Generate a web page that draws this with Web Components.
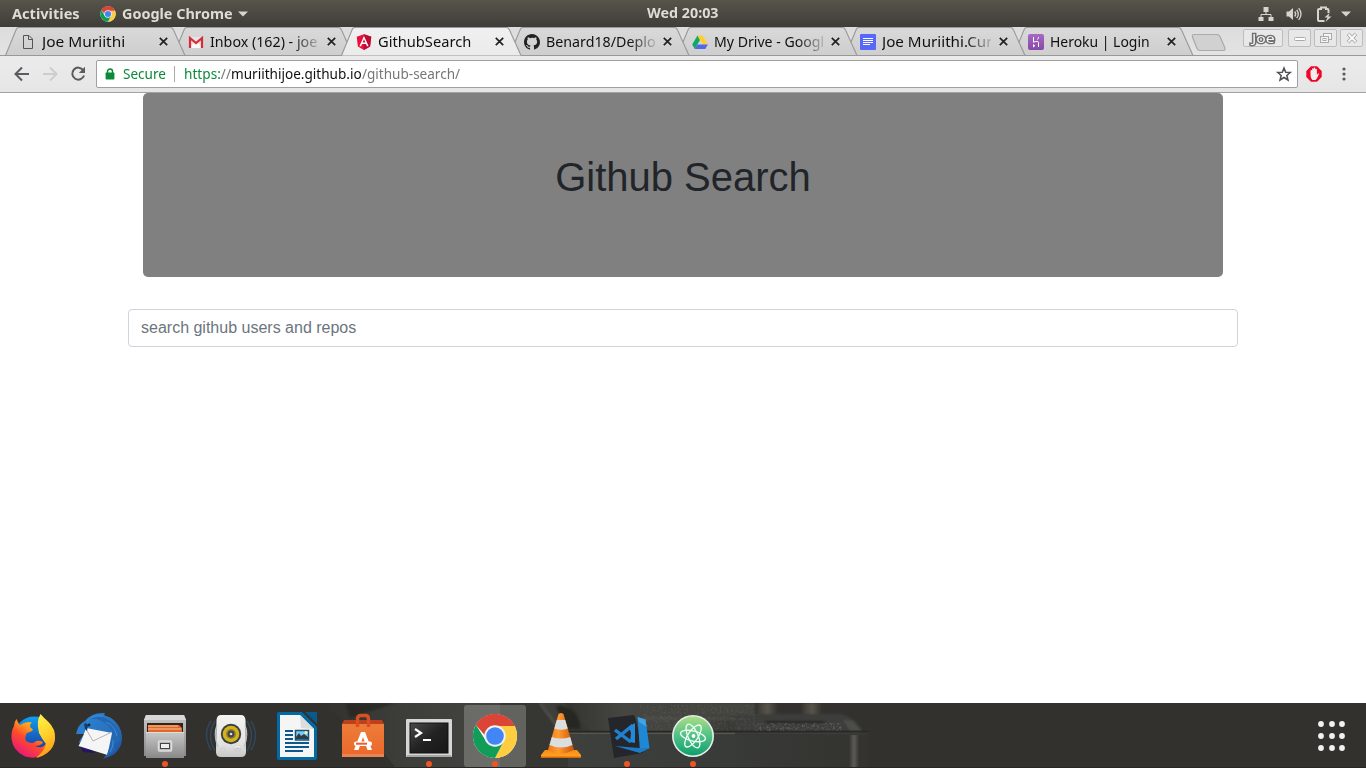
<!DOCTYPE html>
<html lang="en">
<head>
<meta charset="utf-8">
<title>GithubSearch</title>
<style>
html,body{margin:0;height:100%;overflow:hidden;background:#fff}
body{font-family:"Noto Sans","Open Sans",sans-serif}
</style>
</head>
<body>
<desktop-screen></desktop-screen>
<script>
const ICONS = {
chrome: ['0 0 48 48', `<circle cx="24" cy="24" r="23" fill="#fff"/><path d="M24 24L4.1 12.5A23 23 0 0 1 43.9 12.5Z" fill="#db4437"/><path d="M24 13.5H44.5A23 23 0 0 1 24 47L33.1 29.2Z" fill="#ffcd40"/><path d="M4.1 12.5A23 23 0 0 0 24 47L33.4 29L14.6 29.2Z" fill="#0f9d58"/><path d="M4.1 12.5A23 23 0 0 1 44.5 13.5H24L14 24Z" fill="#db4437"/><circle cx="24" cy="24" r="11.2" fill="#f1f1f1"/><circle cx="24" cy="24" r="9.2" fill="#4285f4"/>`],
caret: ['0 0 10 6', `<path d="M0 .5H10L5 5.5Z" fill="#d6d4cf"/>`],
net: ['0 0 16 16', `<path d="M5.5 1h5v5h-5zM.5 11h5v4h-5zM10.500 11h5v4h-5z" fill="#d6d4cf"/><path d="M8 6v2.500M3 11V8.500h10V11" fill="none" stroke="#d6d4cf"/>`],
sound: ['0 0 16 16', `<path d="M.5 5.500H3L7 2v12L3 10.500H.5Z" fill="#d6d4cf"/><path d="M8.700 5.500q2 2.500 0 5M10.700 3.800q3.200 4.200 0 8.400M12.700 2.200q4.600 5.800 0 11.600" fill="none" stroke="#d6d4cf" stroke-width="1.300"/>`],
battery: ['0 0 16 16', `<path d="M8.500 15H3q-1 0-1-1V4q0-1 1-1h2V1.500h5V3h1.500q1 0 1 1v3" fill="none" stroke="#d6d4cf" stroke-width="2"/><path d="M13.500 7L8.500 11.500h3L9.500 16l6-5.500h-3Z" fill="#d6d4cf"/>`],
file: ['0 0 16 16', `<path d="M3.500 1.500h5.500l3.500 3.500v9.500h-9zM8.500 1.500v4h4" fill="none" stroke="#555"/>`],
gmail: ['0 0 16 16', `<path d="M1 3h14v11H1z" fill="#e5e5e5"/><path d="M1 14L7 8l2 0 6 6Z" fill="#f7f7f7"/><path d="M2 14V4L8 9l6-5V14" fill="none" stroke="#d72b35" stroke-width="2.200"/>`],
angular: ['0 0 16 16', `<path d="M8 .2L15.300 2.800 14.100 12.500 8 16 1.900 12.500.7 2.800Z" fill="#e90f3b"/><path d="M8 .2L15.300 2.800 14.100 12.500 8 16Z" fill="#bd0a32"/><path fill-rule="evenodd" d="M8 2L12.600 12.200H10.900L10 9.900H6L5.100 12.200H3.400ZM8 5.200L6.600 8.400H9.400Z" fill="#fff"/>`],
github: ['0 0 16 16', `<path fill="#222" d="M8 0C3.580 0 0 3.580 0 8c0 3.540 2.290 6.530 5.470 7.590.4.070.55-.17.55-.38v-1.490c-2.010.37-2.530-.49-2.690-.94-.09-.23-.48-.94-.82-1.130-.28-.15-.68-.52-.01-.53.63-.01 1.080.58 1.230.82.72 1.210 1.870.87 2.330.66.07-.52.28-.87.51-1.070-1.780-.2-3.640-.89-3.640-3.950 0-.87.31-1.590.82-2.150-.08-.2-.36-1.020.08-2.120 0 0 .67-.21 2.200.82A7.600 7.600 0 0 1 8 3.870c.68 0 1.360.09 2 .27 1.530-1.040 2.200-.82 2.200-.82.44 1.100.16 1.920.08 2.120.51.56.82 1.270.82 2.150 0 3.070-1.870 3.750-3.650 3.950.29.25.54.73.54 1.480v2.190c0 .21.15.46.55.38A8 8 0 0 0 8 0z"/>`],
drive: ['0 0 16 16', `<path d="M5.500 1.500L8 6 2.800 15 .2 10.500Z" fill="#11a861"/><path d="M5.500 1.500H10.600L15.900 10.500H10.700Z" fill="#ffcf2e"/><path d="M5.400 10.500H15.900L13.300 15H2.800Z" fill="#5169e8"/>`],
docs: ['0 0 16 16', `<rect width="16" height="16" rx="1" fill="#5767f7"/><path d="M3 4.500h10M3 6.500h10M3 8.500h10M3 10.500h7" stroke="#fff"/>`],
heroku: ['0 0 16 16', `<defs><linearGradient id="a" x2="0" y2="1"><stop stop-color="#a868c4"/><stop offset="1" stop-color="#8748a8"/></linearGradient></defs><rect width="16" height="16" rx="2" fill="url(#a)"/><path d="M5.500 3v5.200q5-1.800 5 .5V13M10.500 3q0 1.500-1 2.500M5.500 10.500V13l1.300-1.200Z" stroke="#fff" stroke-width="1" fill="none"/>`],
close: ['0 0 9 9', `<path d="M.8.8L8.200 8.200M8.200.8L.8 8.200" stroke="#222" stroke-width="1.700"/>`],
back: ['0 0 16 16', `<path d="M15 8H2M8 1.500L1.500 8 8 14.500" fill="none" stroke="#5a5a5f" stroke-width="2"/>`],
fwd: ['0 0 16 16', `<path d="M1 8H14M8 1.500L14.500 8 8 14.500" fill="none" stroke="#cdcdcd" stroke-width="2"/>`],
reload: ['0 0 16 16', `<path d="M13.300 4.300A6 6 0 1 0 14 9.500" fill="none" stroke="#5a5a5f" stroke-width="2"/><path d="M15 .8V7H8.800Z" fill="#5a5a5f"/>`],
lock: ['0 0 10 12', `<path d="M2.500 5V3.500a2.500 2.500 0 0 1 5 0V5" fill="none" stroke="#0b8a3a" stroke-width="1.500"/><rect x=".6" y="4.500" width="8.800" height="7" rx=".8" fill="#0b8a3a"/>`],
star: ['0 0 16 16', `<path d="M8 2L9.700 6.200 14.300 6.500 10.800 9.500 12 14 8 11.500 4 14 5.200 9.500 1.700 6.500 6.300 6.200Z" fill="none" stroke="#4f4f54" stroke-width="1.500"/>`],
adblock: ['0 0 16 16', `<path d="M5 .3H11L15.700 5V11L11 15.700H5L.3 11V5Z" fill="#f00624"/><path d="M4.500 8V5q0-1 .8-1t.8 1V3.200q0-.9.8-.9t.8.900V2.500q0-.9.8-.9t.8.900v1.200q0-.9.8-.9t.8.900V9l.8-1.300q.7-.8 1.400 0L10.900 12.500 9.500 14H6.500Q4.500 12.500 4.500 8Z" fill="#eee"/>`],
kebab: ['0 0 4 14', `<g fill="#5a5a5f"><circle cx="2" cy="2" r="1.600"/><circle cx="2" cy="7" r="1.600"/><circle cx="2" cy="12" r="1.600"/></g>`],
wmin: ['0 0 14 10', `<rect x="1.500" y="4.500" width="11" height="3" rx="1" fill="#fff" stroke="#aaa"/>`],
wmax: ['0 0 14 12', `<g fill="#f5f5f5" stroke="#aaa"><rect x="4.500" y="1.500" width="8" height="6"/><rect x="1.500" y="4.500" width="8" height="6"/><rect x="4" y="6.500" width="3" height="2"/></g>`],
wclose: ['0 0 14 12', `<path d="M3 2L11 10M11 2L3 10" stroke="#aaa" stroke-width="3.600"/><path d="M3.400 2.400L10.600 9.600M10.600 2.400L3.400 9.600" stroke="#fff" stroke-width="1.800"/>`],
firefox: ['0 0 48 48', `<defs><linearGradient id="a" x1=".85" y1=".1" x2=".2" y2=".95"><stop offset="0" stop-color="#ffd91f"/><stop offset=".35" stop-color="#ff9a1c"/><stop offset=".6" stop-color="#ff4a2c"/><stop offset="1" stop-color="#e8157d"/></linearGradient><linearGradient id="b" x1="0" y1="0" x2="0" y2="1"><stop offset="0" stop-color="#109ff0"/><stop offset="1" stop-color="#1c2a94"/></linearGradient><linearGradient id="c" x1=".3" y1="0" x2=".6" y2="1"><stop offset="0" stop-color="#fff044"/><stop offset=".5" stop-color="#ffd02a"/><stop offset="1" stop-color="#ff9416"/></linearGradient></defs><circle cx="25" cy="24" r="19.500" fill="url(#b)"/><path d="M7.500 7Q9 11 11 13Q17 9 23 10.500Q20 13 21.500 15.500L24 17.500Q23 19.500 18 21Q15 25 17 29Q24 33 27 29Q33 28 34 31Q31 34 26 34Q34 38 38 30L46 26Q45 36 38 41Q28 48 16 44.500Q4 39 2.500 27Q2 19 5 14Q5 10 7.500 7Z" fill="url(#a)"/><path d="M31.500 2Q35 6 39 9.500Q47 17 46 27Q45 36 38 41Q33 45 27 46Q36 38 37 32Q33 27 30 21Q27 9 31.500 2Z" fill="url(#c)"/>`],
thunderbird: ['0 0 48 48', `<defs><linearGradient id="a" x1="0" y1="0" x2="1" y2="1"><stop stop-color="#2b87d6"/><stop offset=".5" stop-color="#2a74c0"/><stop offset="1" stop-color="#1c4f9a"/></linearGradient></defs><path d="M4 31L8 40 20 41 12 33Z" fill="#241463"/><path d="M1 22Q3 12 10 9Q17 0 30 1L29 3Q42 7 46 19Q50 34 38 43L28 47L34 39 4 31Q5 26 10 22Z" fill="url(#a)"/><path d="M11 16L37 21 32.500 43 3.500 34Q7 28 11 16Z" fill="#f5f5f6"/><path d="M11 17L18 29 37 20" fill="none" stroke="#b4b4b8"/><path d="M10 10Q18 4 26 9Q36 13 38 22L35 34L31 45L40 38 39 32 45 28 43 22Q41 11 30 6Q19 1 10 10Z" fill="#2467b2"/><path d="M9 12Q11 10 13 13L12 19L10 17Z" fill="#173a66"/><path d="M12 9Q18 3 28 4M31 10Q40 14 42 24M38 28Q39 34 35 40" stroke="#3a8fdc" fill="none"/><circle cx="14" cy="13" r="1.400" fill="#15263e"/>`],
files: ['0 0 48 48', `<defs><linearGradient id="a" x2="0" y2="1"><stop stop-color="#c8c8c8"/><stop offset="1" stop-color="#898989"/></linearGradient></defs><path d="M5 3H43L45 8V44H3V8Z" fill="url(#a)"/><path d="M5 3H43L45 8H3Z" fill="#d8d8d8"/><path d="M6 11H42V21H6Z" fill="#302420"/><path d="M7 13H38L41 16V22H7Z" fill="#df682d"/><path d="M7 14H37M7 17H40" stroke="#ffc392" stroke-width="1.200"/><path d="M5 20H43V46H5Z" fill="url(#a)"/><path d="M5 20.500H43" stroke="#ddd"/><rect x="17.500" y="29" width="13" height="10" rx="1" fill="#bbb" stroke="#ddd" stroke-width="1.500"/><rect x="19.500" y="31.500" width="9" height="5" fill="#eee" stroke="#444"/>`],
speaker: ['0 0 48 48', `<defs><linearGradient id="a" x2="0" y2="1"><stop stop-color="#f4f4f3"/><stop offset=".7" stop-color="#e2e2e0"/><stop offset="1" stop-color="#c8c8c6"/></linearGradient></defs><path d="M8 9Q-1 23 8 39M4 9Q-5 23 4 38M40 9Q49 23 40 39M44 9Q53 23 44 38" fill="none" stroke="#33465a" stroke-width="1.500"/><path d="M14 3H34Q38 3 38.500 8L39 40Q39 45 34 45H14Q9 45 9 40L9.500 8Q10 3 14 3Z" fill="url(#a)"/><path d="M10 13Q6 23 11 35M38 13Q42 23 37 35" fill="none" stroke="#b5c3cf" stroke-width="1.200"/><circle cx="24" cy="22" r="10.200" fill="#3f3f3f"/><circle cx="24" cy="22" r="8.300" fill="#d2b51c"/><circle cx="24" cy="22" r="5" fill="#93832f"/><circle cx="24" cy="22" r="3.400" fill="#454545"/><circle cx="24" cy="22" r="1.300" fill="#ddd"/><circle cx="30.500" cy="37" r="4" fill="#d0d0cf"/><path d="M27.500 35.500q3-3 6 0" stroke="#fff" fill="none"/><path d="M14 36h4v4h-4z" fill="none" stroke="#cfcfcf"/>`],
writer: ['0 0 48 48', `<path d="M6 0H29L44 15V46Q44 48 42 48H6Q4 48 4 46V2Q4 0 6 0Z" fill="#0369a3"/><path d="M32 0H44V12Z" fill="#075b8c"/><path d="M7 3H27L41 17V45H7Z" fill="#f5f5f5"/><path d="M27 3L28 16 41 17Z" fill="#ddd"/><path d="M12 19H20M12 23H20M12 27H20M12 31H36M12 35H36M12 39H30" stroke="#0c578e" stroke-width="1.800"/><path d="M22.500 18.500H35.500V28H22.500Z" fill="#7ec9f4" stroke="#155375" stroke-width="1.500"/><path d="M23 27V25L26 21 28 24 31 22 35 25V27Z" fill="#2b3c45"/><circle cx="33" cy="20.500" r="1.500" fill="#fff19d"/>`],
software: ['0 0 48 48', `<defs><linearGradient id="a" x2="0" y2="1"><stop stop-color="#ed7c38"/><stop offset="1" stop-color="#eb682c"/></linearGradient></defs><path d="M5 8H43L45 12V17H3V12Z" fill="#bb401b"/><path d="M3 12H45V45H3Z" fill="url(#a)"/><path d="M3 42H45V45H3Z" fill="#ec8352"/><path d="M18.500 15V7Q18.500 3.500 21.500 3.500H26.500Q29.500 3.500 29.500 7V15" fill="none" stroke="#d94f22" stroke-width="3.400"/><path d="M22 20H26L33 38H28.500L24 25 19.500 38H15Z" fill="#fff"/><rect x="15" y="29.500" width="18" height="4.500" rx="2" fill="#fff"/><path d="M17 31.700H28" stroke="#e66029" stroke-width="2"/>`],
terminal: ['0 0 48 48', `<defs><linearGradient id="a" x1="0" y1="0" x2="1" y2="1"><stop stop-color="#4b4b4b"/><stop offset=".5" stop-color="#222"/><stop offset="1" stop-color="#171717"/></linearGradient></defs><rect x="1" y="7" width="46" height="38" rx="1" fill="#d6d6d6"/><path d="M2 44H46" stroke="#a8a8a8" stroke-width="2"/><rect x="5" y="11" width="38" height="30" fill="url(#a)" stroke="#111"/><path d="M10 17L16 21 10 25" fill="none" stroke="#fff" stroke-width="2.200"/><path d="M18 28H26" stroke="#fff" stroke-width="2"/>`],
vlc: ['0 0 48 48', `<defs><linearGradient id="a"><stop stop-color="#ef7816"/><stop offset=".4" stop-color="#ff9a30"/><stop offset="1" stop-color="#c9550a"/></linearGradient><linearGradient id="b" x2="0" y2="1"><stop stop-color="#f98a12"/><stop offset="1" stop-color="#ffa928"/></linearGradient></defs><path d="M8 38H40L44 43V46H4V43Z" fill="url(#b)"/><path d="M4 44.500H44V46H4Z" fill="#d8660a"/><path d="M21.500 2Q24 0 26.500 2L37 38Q24 45 11 38Z" fill="url(#a)"/><path d="M19.800 8H28.200L30.700 16.500Q24 19 17.300 16.500ZM14.800 25Q24 28 33.200 25L35.500 33Q24 38 12.500 33Z" fill="#dadedf"/>`],
code: ['0 0 48 48', `<path d="M5 6L31 3 33 8 40 41 11 46Z" fill="#25262b"/><path d="M34.500 5L42.500 7.500 46.500 36 37 40Z" fill="#1f87d3"/><path d="M34.500 5L42.500 7.500 43.500 15 36 10Z" fill="#41a2e4"/><path d="M12 34L36 36 46.500 36 37 41Z" fill="#1a7cc8"/><path d="M12 18L28 30M13 27L30 13" stroke="#1f82d0" stroke-width="3.400"/><path d="M26 15L32 11V31L27 30 28 21Z" fill="#2189d6"/>`],
atom: ['0 0 48 48', `<defs><linearGradient id="a" x2="0" y2="1"><stop stop-color="#a9dd86"/><stop offset=".5" stop-color="#4fc186"/><stop offset="1" stop-color="#0f9f6d"/></linearGradient></defs><circle cx="24" cy="24" r="21" fill="#e9eeea"/><circle cx="24" cy="24" r="19.400" fill="url(#a)"/><g fill="none" stroke="#f0fff5" stroke-width="1.300"><ellipse cx="24" cy="24" rx="12.800" ry="5" transform="rotate(14 24 24)"/><ellipse cx="24" cy="24" rx="12.800" ry="5" transform="rotate(66 24 24)"/><ellipse cx="24" cy="24" rx="12.800" ry="5" transform="rotate(124 24 24)"/></g><circle cx="24.500" cy="24" r="1.900" fill="#fff"/>`]
};

function define(tag, markup, after) {
  customElements.define(tag, class extends HTMLElement {
    connectedCallback() {
      if (this.shadowRoot) return;
      this.attachShadow({mode: 'open'}).innerHTML = typeof markup === 'function' ? markup(this) : markup;
      if (after) after(this);
    }
  });
}

/* Vector icon: name, w, optional h */
define('ui-icon', el => {
  const [box, body] = ICONS[el.getAttribute('name')];
  const w = el.getAttribute('w'), h = el.getAttribute('h') || w;
  return `<style>:host{display:block;flex:none;width:${w}px;height:${h}px}svg{display:block;width:100%;height:100%;overflow:visible}</style><svg viewBox="${box}">${body}</svg>`;
});

/* One-line label condensed or widened to a fixed width */
define('fit-text', el => `<style>:host{display:block;flex:none;width:${el.getAttribute('w')}px;white-space:nowrap}span{display:inline-block;transform-origin:0 50%}</style><span><slot></slot></span>`,
  el => {
    const s = el.shadowRoot.querySelector('span');
    s.style.transform = `scaleX(${el.getAttribute('w') / s.offsetWidth})`;
  });

define('top-bar', `<style>
:host{display:grid;grid-template-columns:1fr 72px 1fr;align-items:center;height:27px;box-sizing:border-box;background:linear-gradient(#57544b,#3e3d38);color:#dfdcd6;font-weight:700;font-size:13.500px;line-height:26px}
.l{display:flex;align-items:center;padding-left:12px}
.r{display:flex;align-items:center;justify-content:flex-end;padding-right:15px}
.m{margin-top:-2px}
</style>
<div class="l"><fit-text w="68">Activities</fit-text><ui-icon name="chrome" w="16" style="margin:0 6px 0 20px"></ui-icon><fit-text w="111">Google Chrome</fit-text><ui-icon name="caret" w="10" h="6" style="margin-left:5px"></ui-icon></div>
<fit-text class="m" w="72">Wed 20:03</fit-text>
<div class="r"><ui-icon name="net" w="16"></ui-icon><ui-icon name="sound" w="16" style="margin-left:12px"></ui-icon><ui-icon name="battery" w="16" style="margin-left:14px"></ui-icon><ui-icon name="caret" w="10" h="6" style="margin-left:9px"></ui-icon></div>`);

define('browser-tab', el => {
  const on = el.hasAttribute('active');
  return `<style>
:host{display:grid;flex:none;width:181px;height:29px;margin-right:-13px;position:relative}
svg,.c{grid-area:1/1}
.c{display:flex;align-items:center;padding-left:15px;height:28px;padding-top:1px;box-sizing:border-box;font-size:14.500px;line-height:20px;color:#111}
.t{width:114px;margin:-2px 0 0 6px;overflow:hidden;${el.hasAttribute('fade') ? 'width:109px;margin-right:5px;-webkit-mask-image:linear-gradient(90deg,#000 76%,transparent 105%)' : ''}}
</style>
<svg width="181" height="29"><defs><linearGradient id="g" x2="0" y2="1"><stop stop-color="${on ? '#f0f0f0' : '#d9d9d9'}"/><stop offset="1" stop-color="${on ? '#ebebeb' : '#cecece'}"/></linearGradient></defs>
<path d="M0.500 28.500L11 3Q12 .5 14 .5H165.500Q167.500 .5 168.500 3L180 28.500" fill="url(#g)" stroke="#999" stroke-width="1.100"/>${on ? '' : '<path d="M0 28.500H181" stroke="#999"/>'}</svg>
<div class="c"><ui-icon name="${el.getAttribute('icon')}" w="16"></ui-icon><div class="t"><fit-text w="${el.getAttribute('w')}"><slot></slot></fit-text></div><ui-icon name="close" w="9" style="margin-left:3px"></ui-icon></div>`;
});

define('tab-strip', `<style>
:host{display:flex;height:29px;box-sizing:border-box;padding-left:5px;background:linear-gradient(#dcdcdc,#e4e4e4);box-shadow:inset 0 -1px #999;overflow:hidden}
.n{flex:none;margin:6px 0 0 10px}
.w{display:flex;margin:2px 3px 0 auto;gap:3px}
.b{box-sizing:border-box;height:18px;width:23px;border:1px solid #bdbdbd;border-radius:2px;display:grid;place-items:center;background:#e8e8e8}
.j{width:40px;margin-right:2px;font-size:13px;line-height:16px;color:#f5f5f5;-webkit-text-stroke:2.600px #707070;paint-order:stroke fill}
</style>
<browser-tab icon="file" w="83" style="z-index:6">Joe Muriithi</browser-tab>
<browser-tab icon="gmail" w="107" fade style="z-index:5">Inbox (162) - joe</browser-tab>
<browser-tab icon="angular" w="93" active style="z-index:9">GithubSearch</browser-tab>
<browser-tab icon="github" w="110" fade style="z-index:4">Benard18/Deplo</browser-tab>
<browser-tab icon="drive" w="110" fade style="z-index:3">My Drive - Googl</browser-tab>
<browser-tab icon="docs" w="110" fade style="z-index:2">Joe Muriithi.Cur</browser-tab>
<browser-tab icon="heroku" w="100" style="z-index:1">Heroku | Login</browser-tab>
<svg class="n" width="36" height="19"><path d="M3 1.500H26Q28 1.500 29 3.500L34 15Q34.500 17.500 32 17.500H9Q7 17.500 6 15.500L1.500 4Q1 1.500 3 1.500Z" fill="#d1d1d1" stroke="#aaa" stroke-width="1.200"/></svg>
<div class="w"><div class="b j"><fit-text w="23">Joe</fit-text></div><div class="b"><ui-icon name="wmin" w="14" h="10"></ui-icon></div><div class="b"><ui-icon name="wmax" w="14" h="12"></ui-icon></div><div class="b"><ui-icon name="wclose" w="14" h="12"></ui-icon></div></div>`);

define('tool-bar', `<style>
:host{display:flex;align-items:center;height:37px;box-sizing:border-box;border-bottom:1px solid #a2a2a2;background:linear-gradient(#ebebeb,#e6e6e6);padding:0 20px 0 14px;font-size:14.500px}
.u{flex:1;display:flex;align-items:center;height:28px;box-sizing:border-box;border:1px solid #a0a0a0;border-radius:2px;background:#fff;margin:0 8px 0 10px;padding:0 5px 0 8px;line-height:26px}
.u fit-text{margin-top:-2px}
.s{width:1px;height:16px;background:#aaa;margin:0 9px 0 8px}
.g{color:#0b8a3a}.k{color:#111}.p{color:#777}
</style>
<ui-icon name="back" w="16"></ui-icon><ui-icon name="fwd" w="16" style="margin-left:12px"></ui-icon><ui-icon name="reload" w="16" style="margin-left:12px"></ui-icon>
<div class="u"><ui-icon name="lock" w="10" h="12"></ui-icon><fit-text class="g" w="43" style="margin-left:8px">Secure</fit-text><div class="s"></div><fit-text class="p" w="47"><span class="g" style="color:#0b8a3a">https:</span>//</fit-text><fit-text class="k" w="131">muriithijoe.github.io</fit-text><fit-text class="p" w="98">/github-search/</fit-text><ui-icon name="star" w="16" style="margin-left:auto"></ui-icon></div>
<ui-icon name="adblock" w="16"></ui-icon><ui-icon name="kebab" w="4" h="14" style="margin-left:20px"></ui-icon>`);

define('search-page', `<style>
:host{display:block;flex:1;background:#fff;font:16px/24px "Liberation Sans",Arial,sans-serif}
.w{width:1110px;margin:0 auto}
header{margin:0 15px 32px;height:184px;box-sizing:border-box;padding:60px 32px 64px;background:#808080;border-radius:5px;text-align:center}
h1{margin:0;font-size:40px;line-height:48px;font-weight:400;color:#212529}
input{display:block;width:100%;height:38px;box-sizing:border-box;border:1px solid #ced4da;border-radius:4px;padding:6px 12px;font:inherit;background:#fff}
input::placeholder{color:#6c757d;opacity:1}
</style>
<div class="w"><header><h1>Github Search</h1></header><input placeholder="search github users and repos"></div>`);

define('dock-item', el => `<style>
:host{display:grid;grid-template:62px/62px;place-items:center;border-radius:3px;${el.hasAttribute('active') ? 'background:#ffffff38' : ''}}
ui-icon,i{grid-area:1/1}
i{width:6px;height:6px;border-radius:50%;background:#ee5424;align-self:end}
</style><ui-icon name="${el.getAttribute('icon')}" w="${el.getAttribute('size') || 48}"></ui-icon>${el.hasAttribute('open') ? '<i></i>' : ''}`);

define('app-dock', `<style>
:host{display:grid;grid-template-columns:1366px;height:65px;background:#32312d;overflow:hidden}
.bg,.row{grid-area:1/1}
.row{display:flex;gap:4px;padding:2px 14px 0 2px;align-items:flex-start;z-index:1}
.apps{margin:13px 0 0 auto}
</style>
<svg class="bg" width="1366" height="65"><defs>
<linearGradient id="a"><stop stop-color="#32312d"/><stop offset=".3" stop-color="#3d3d39"/><stop offset=".7" stop-color="#454541"/><stop offset="1" stop-color="#343431"/></linearGradient>
<linearGradient id="b"><stop stop-color="#33332f"/><stop offset=".3" stop-color="#454541"/><stop offset=".7" stop-color="#41413d"/><stop offset="1" stop-color="#33322e"/></linearGradient>
<linearGradient id="c"><stop stop-color="#3e403d"/><stop offset=".5" stop-color="#393b38"/><stop offset="1" stop-color="#33332f"/></linearGradient>
<linearGradient id="d"><stop stop-color="#353431"/><stop offset=".5" stop-color="#5d5b57"/><stop offset="1" stop-color="#353431"/></linearGradient>
<linearGradient id="e"><stop stop-color="#3a3934"/><stop offset=".5" stop-color="#59554b"/><stop offset="1" stop-color="#33322e"/></linearGradient>
<filter id="s" x="-.1" y="-.2" width="1.200" height="1.400"><feGaussianBlur stdDeviation="1.300"/></filter>
<filter id="n" x="0" y="0" width="1" height="1"><feTurbulence type="fractalNoise" baseFrequency=".45" numOctaves="2" seed="4"/><feColorMatrix values="0 0 0 0 .5 0 0 0 0 .52 0 0 0 0 .5 3 0 0 0 -1.400"/></filter></defs>
<path d="M320 0H600V65H395Q385 45 320 0Z" fill="url(#a)"/>
<path d="M345 0H395L350 15Z" fill="#22231f" opacity=".6" filter="url(#s)"/>
<path d="M542 0L560 28H868V65H500V0Z" fill="#363733"/>
<path d="M565 0H757V28H590Z" fill="url(#b)"/>
<g filter="url(#s)"><path d="M556 3Q578 2 581 26H566Z" fill="#262622"/>
<path d="M658 12L680 0H755V12Z" fill="#454540"/><path d="M645 14H760V17H640Z" fill="#555650" opacity=".5"/>
<path d="M757 0H778V11H757Z" fill="url(#e)"/><path d="M802 0H822V12H802Z" fill="url(#e)"/>
<path d="M735 11H842Q855 14 862 28H735Z" fill="#3c3d3a"/>
<path d="M765 18H825V20H765Z" fill="#20211e"/>
<path d="M843 17L850 28H862L853 18Z" fill="#4d4e4a"/></g>
<path d="M680 2H755V27H640V18Z" filter="url(#n)" opacity=".1"/>
<path d="M755 20H842V28H755Z" filter="url(#n)" opacity=".28"/>
<path d="M564 28.500H868" stroke="#22231f" stroke-width="1.500" opacity=".7"/><path d="M564 30.500H735" stroke="#565751" stroke-width="1.500"/><path d="M735 30.500H860" stroke="#3d3d39"/>
<path d="M568 32H868V65H568Z" fill="url(#c)"/>
<path d="M849 32H859V65H849Z" fill="url(#d)"/>
<path d="M540 0L556 22" stroke="#5d5d57" stroke-width="1.500" fill="none" filter="url(#s)"/>
<path d="M0 64.500H1366" stroke="#282723"/></svg>
<div class="row">
<dock-item icon="firefox"></dock-item><dock-item icon="thunderbird"></dock-item><dock-item icon="files" open></dock-item><dock-item icon="speaker"></dock-item><dock-item icon="writer"></dock-item><dock-item icon="software"></dock-item><dock-item icon="terminal" open></dock-item><dock-item icon="chrome" size="46" open active></dock-item><dock-item icon="vlc"></dock-item><dock-item icon="code" open></dock-item><dock-item icon="atom" open></dock-item>
<svg class="apps" width="34" height="34"><g fill="#f2f1ef"><circle cx="3" cy="6" r="2.900"/><circle cx="14" cy="6" r="2.900"/><circle cx="24" cy="6" r="2.900"/><circle cx="3" cy="18" r="2.900"/><circle cx="14" cy="18" r="2.900"/><circle cx="24" cy="18" r="2.900"/><circle cx="3" cy="30" r="2.900"/><circle cx="14" cy="30" r="2.900"/><circle cx="24" cy="30" r="2.900"/></g></svg>
</div>`);

define('desktop-screen', `<style>:host{display:flex;flex-direction:column;width:1366px;height:768px;overflow:hidden}</style>
<top-bar></top-bar><tab-strip></tab-strip><tool-bar></tool-bar><search-page></search-page><app-dock></app-dock>`);
</script>
</body>
</html>
